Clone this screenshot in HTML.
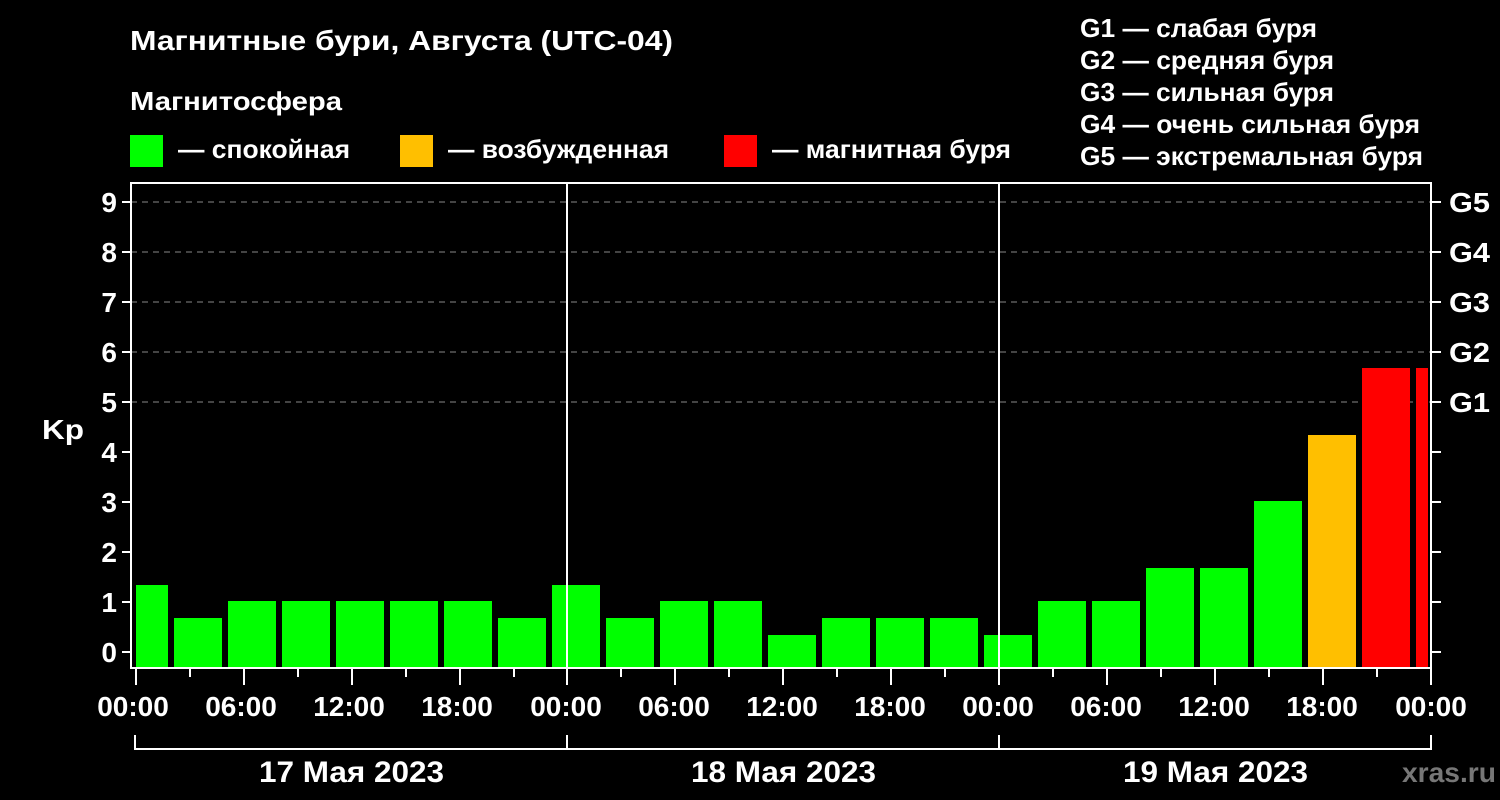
<!DOCTYPE html>
<html><head><meta charset="utf-8"><style>
html,body{margin:0;padding:0;background:#000;width:1500px;height:800px;overflow:hidden}
svg text{font-family:"Liberation Sans",sans-serif;font-weight:bold;fill:#fff}
</style></head><body>
<svg width="1500" height="800" xmlns="http://www.w3.org/2000/svg">
<text x="130" y="50" font-size="28" textLength="543" lengthAdjust="spacingAndGlyphs">Магнитные бури, Августа (UTC-04)</text>
<text x="130" y="110" font-size="26" textLength="212" lengthAdjust="spacingAndGlyphs">Магнитосфера</text>
<rect x="130" y="135" width="33" height="32" fill="#00ff00"/>
<text x="178" y="158" font-size="26" textLength="172" lengthAdjust="spacingAndGlyphs">— спокойная</text>
<rect x="400" y="135" width="33" height="32" fill="#ffbf00"/>
<text x="448" y="158" font-size="26" textLength="221" lengthAdjust="spacingAndGlyphs">— возбужденная</text>
<rect x="724" y="135" width="33" height="32" fill="#ff0000"/>
<text x="772" y="158" font-size="26" textLength="239" lengthAdjust="spacingAndGlyphs">— магнитная буря</text>
<g font-size="26" lengthAdjust="spacingAndGlyphs">
<text x="1080" y="37" textLength="237" lengthAdjust="spacingAndGlyphs">G1 — слабая буря</text>
<text x="1080" y="69" textLength="254" lengthAdjust="spacingAndGlyphs">G2 — средняя буря</text>
<text x="1080" y="101" textLength="254" lengthAdjust="spacingAndGlyphs">G3 — сильная буря</text>
<text x="1080" y="133" textLength="340" lengthAdjust="spacingAndGlyphs">G4 — очень сильная буря</text>
<text x="1080" y="165" textLength="343" lengthAdjust="spacingAndGlyphs">G5 — экстремальная буря</text>
</g>
<g stroke="#888" stroke-width="1" stroke-dasharray="6,5">
<line x1="131" y1="202" x2="1431" y2="202"/><line x1="131" y1="252" x2="1431" y2="252"/>
<line x1="131" y1="302" x2="1431" y2="302"/><line x1="131" y1="352" x2="1431" y2="352"/>
<line x1="131" y1="402" x2="1431" y2="402"/>
</g>
<g id="bars">
<rect x="136" y="585" width="32" height="83" fill="#00ff00"/>
<rect x="174" y="618" width="48" height="50" fill="#00ff00"/>
<rect x="228" y="601" width="48" height="67" fill="#00ff00"/>
<rect x="282" y="601" width="48" height="67" fill="#00ff00"/>
<rect x="336" y="601" width="48" height="67" fill="#00ff00"/>
<rect x="390" y="601" width="48" height="67" fill="#00ff00"/>
<rect x="444" y="601" width="48" height="67" fill="#00ff00"/>
<rect x="498" y="618" width="48" height="50" fill="#00ff00"/>
<rect x="552" y="585" width="48" height="83" fill="#00ff00"/>
<rect x="606" y="618" width="48" height="50" fill="#00ff00"/>
<rect x="660" y="601" width="48" height="67" fill="#00ff00"/>
<rect x="714" y="601" width="48" height="67" fill="#00ff00"/>
<rect x="768" y="635" width="48" height="33" fill="#00ff00"/>
<rect x="822" y="618" width="48" height="50" fill="#00ff00"/>
<rect x="876" y="618" width="48" height="50" fill="#00ff00"/>
<rect x="930" y="618" width="48" height="50" fill="#00ff00"/>
<rect x="984" y="635" width="48" height="33" fill="#00ff00"/>
<rect x="1038" y="601" width="48" height="67" fill="#00ff00"/>
<rect x="1092" y="601" width="48" height="67" fill="#00ff00"/>
<rect x="1146" y="568" width="48" height="100" fill="#00ff00"/>
<rect x="1200" y="568" width="48" height="100" fill="#00ff00"/>
<rect x="1254" y="501" width="48" height="167" fill="#00ff00"/>
<rect x="1308" y="435" width="48" height="233" fill="#ffbf00"/>
<rect x="1362" y="368" width="48" height="300" fill="#ff0000"/>
<rect x="1416" y="368" width="12" height="300" fill="#ff0000"/>
</g>
<g stroke="#fff" stroke-width="2" fill="none">
<rect x="131" y="183" width="1300" height="485"/>
<line x1="567" y1="183" x2="567" y2="668"/><line x1="999" y1="183" x2="999" y2="668"/>
<path d="M122 202H131M122 252H131M122 302H131M122 352H131M122 402H131M122 452H131M122 502H131M122 552H131M122 602H131M122 652H131"/>
<path d="M1431 202H1441M1431 252H1441M1431 302H1441M1431 352H1441M1431 402H1441M1431 452H1441M1431 502H1441M1431 552H1441M1431 602H1441M1431 652H1441"/>
<path d="M136 668V685M190 668V677M244 668V685M298 668V677M352 668V685M406 668V677M460 668V685M514 668V677M567 668V685M621 668V677M675 668V685M729 668V677M783 668V685M837 668V677M891 668V685M945 668V677M999 668V685M1053 668V677M1107 668V685M1161 668V677M1215 668V685M1269 668V677M1323 668V685M1377 668V677M1431 668V685"/>
<path d="M135 735V749H1431V735M567 735V749M999 735V749"/>
</g>
<g font-size="28" text-anchor="end">
<text x="117" y="212">9</text><text x="117" y="262">8</text><text x="117" y="312">7</text>
<text x="117" y="362">6</text><text x="117" y="412">5</text><text x="117" y="462">4</text>
<text x="117" y="512">3</text><text x="117" y="562">2</text><text x="117" y="612">1</text>
<text x="117" y="662">0</text>
</g>
<text x="42" y="439" font-size="28" textLength="42" lengthAdjust="spacingAndGlyphs">Kp</text>
<g font-size="28">
<text x="1449" y="212" textLength="41" lengthAdjust="spacingAndGlyphs">G5</text><text x="1449" y="262" textLength="41" lengthAdjust="spacingAndGlyphs">G4</text><text x="1449" y="312" textLength="41" lengthAdjust="spacingAndGlyphs">G3</text>
<text x="1449" y="362" textLength="41" lengthAdjust="spacingAndGlyphs">G2</text><text x="1449" y="412" textLength="41" lengthAdjust="spacingAndGlyphs">G1</text>
</g>
<g font-size="28" text-anchor="middle">
<text x="133" y="716">00:00</text><text x="241" y="716">06:00</text><text x="349" y="716">12:00</text><text x="457" y="716">18:00</text>
<text x="566" y="716">00:00</text><text x="674" y="716">06:00</text><text x="782" y="716">12:00</text><text x="890" y="716">18:00</text>
<text x="998" y="716">00:00</text><text x="1106" y="716">06:00</text><text x="1214" y="716">12:00</text><text x="1322" y="716">18:00</text>
<text x="1431" y="716">00:00</text>
</g>
<g font-size="30">
<text x="259" y="782" textLength="185" lengthAdjust="spacingAndGlyphs">17 Мая 2023</text>
<text x="691" y="782" textLength="185" lengthAdjust="spacingAndGlyphs">18 Мая 2023</text>
<text x="1123" y="782" textLength="185" lengthAdjust="spacingAndGlyphs">19 Мая 2023</text>
</g>
<text x="1402" y="782" font-size="28" textLength="94" lengthAdjust="spacingAndGlyphs" style="fill:#777">xras.ru</text>
</svg>
</body></html>
